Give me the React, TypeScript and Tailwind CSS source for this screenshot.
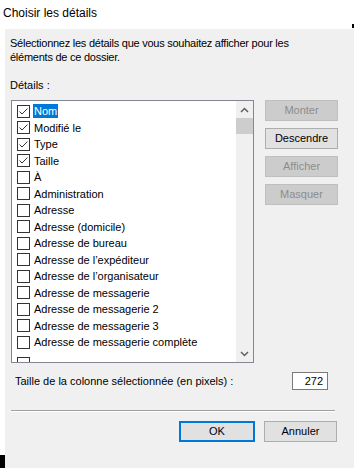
import React from 'react'

const FONT = { fontFamily: '"Liberation Sans", Arial, sans-serif' }

interface Detail {
  label: string
  checked: boolean
}

const DETAILS: Detail[] = [
  { label: 'Nom', checked: true },
  { label: 'Modifié le', checked: true },
  { label: 'Type', checked: true },
  { label: 'Taille', checked: true },
  { label: 'À', checked: false },
  { label: 'Administration', checked: false },
  { label: 'Adresse', checked: false },
  { label: 'Adresse (domicile)', checked: false },
  { label: 'Adresse de bureau', checked: false },
  { label: 'Adresse de l’expéditeur', checked: false },
  { label: 'Adresse de l’organisateur', checked: false },
  { label: 'Adresse de messagerie', checked: false },
  { label: 'Adresse de messagerie 2', checked: false },
  { label: 'Adresse de messagerie 3', checked: false },
  { label: 'Adresse de messagerie complète', checked: false },
]

function CheckBox({ checked }: { checked: boolean }) {
  return (
    <div className="w-[13px] h-[13px] shrink-0 border border-[#333333] bg-white flex items-center justify-center">
      {checked && (
        <svg width="11" height="11" viewBox="0 0 11 11" fill="none">
          <path d="M1.5 5.5 L4 8 L9.5 2.5" stroke="#333333" strokeWidth="1" />
        </svg>
      )}
    </div>
  )
}

function SideButton({ label, disabled }: { label: string; disabled?: boolean }) {
  return (
    <div
      className={
        disabled
          ? 'w-[73px] h-[21px] flex items-center justify-center border border-[#bfbfbf] bg-[#cccccc] text-[#8c8c8c]'
          : 'w-[73px] h-[21px] flex items-center justify-center border border-[#adadad] bg-[#e1e1e1] text-black'
      }
    >
      {label}
    </div>
  )
}

function ScrollBar() {
  return (
    <div className="w-[17px] h-full bg-[#f0f0f0] flex flex-col">
      <div className="h-[17px] flex items-center justify-center">
        <svg width="9" height="6" viewBox="0 0 9 6" fill="none">
          <path d="M1 5 L4.5 1.5 L8 5" stroke="#606060" strokeWidth="1.5" />
        </svg>
      </div>
      <div className="h-[16px] bg-[#cdcdcd]" />
      <div className="flex-1" />
      <div className="h-[17px] flex items-center justify-center">
        <svg width="9" height="6" viewBox="0 0 9 6" fill="none">
          <path d="M1 1 L4.5 4.5 L8 1" stroke="#606060" strokeWidth="1.5" />
        </svg>
      </div>
    </div>
  )
}

export default function App() {
  return (
    <div className="relative w-[354px] h-[468px] bg-white overflow-hidden text-[11px] text-black" style={FONT}>
      <div className="absolute right-0 top-[24px] w-[2px] h-[4px] bg-black" />
      <div className="h-[29px] pl-[3px] pt-[5px] leading-[16px] text-[12px]">Choisir les détails</div>
      <div className="flex h-[439px]">
        <div className="w-[5px] flex flex-col justify-end">
          <div className="h-[13px] bg-black" />
        </div>
        <div className="flex-1 bg-[#f0f0f0] flex flex-col">
          <div className="pl-[5px] pt-[7px] leading-[14px] tracking-[-0.25px]">
            Sélectionnez les détails que vous souhaitez afficher pour les
            <br />
            éléments de ce dossier.
          </div>
          <div className="pl-[5px] mt-[14px] leading-[14px]">Détails :</div>
          <div className="flex mt-[8px] pl-[6px]">
            <div className="w-[243px] h-[263px] border border-[#828790] bg-white flex overflow-hidden">
              <div className="flex-1 pt-[2px] pl-[5px] overflow-hidden">
                {DETAILS.map((d, i) => (
                  <div key={d.label} className="h-[16.5px] flex items-center">
                    <CheckBox checked={d.checked} />
                    <span
                      className={
                        i === 0
                          ? 'ml-[3px] px-[1px] h-[14px] leading-[14px] bg-[#0078d7] text-white whitespace-nowrap'
                          : 'ml-[3px] px-[1px] h-[14px] leading-[14px] whitespace-nowrap'
                      }
                    >
                      {d.label}
                    </span>
                  </div>
                ))}
                <div className="mt-[6px] w-[13px] h-[13px] border border-[#333333] bg-white" />
              </div>
              <ScrollBar />
            </div>
            <div className="ml-[11px] flex flex-col gap-[7px]">
              <SideButton label="Monter" disabled />
              <SideButton label="Descendre" />
              <SideButton label="Afficher" disabled />
              <SideButton label="Masquer" disabled />
            </div>
          </div>
          <div className="flex items-center mt-[9px] pl-[10px]">
            <span className="leading-[14px]">Taille de la colonne sélectionnée (en pixels) :</span>
            <div className="ml-auto mr-[26px] w-[36px] h-[18px] border border-[#7a7a7a] bg-white text-right pr-[4px] leading-[16px]">
              272
            </div>
          </div>
          <div className="mt-[20px] ml-[6px] mr-[19px] h-[2px] border-t border-[#a0a0a0] border-b border-b-white" />
          <div className="flex justify-end mt-[9px] pr-[17px] gap-[9px]">
            <div className="w-[76px] h-[21px] flex items-center justify-center border-2 border-[#0078d7] bg-[#e1e1e1]">OK</div>
            <div className="w-[73px] h-[21px] flex items-center justify-center border border-[#adadad] bg-[#e1e1e1]">Annuler</div>
          </div>
        </div>
      </div>
    </div>
  )
}
